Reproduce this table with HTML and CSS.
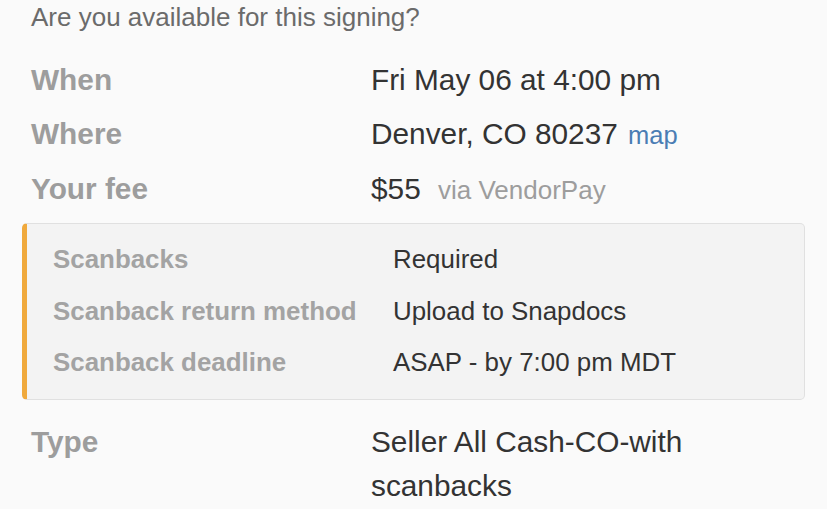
FILE: index.html
```html
<!DOCTYPE html>
<html>
<head>
<meta charset="utf-8">
<link rel="stylesheet" href="styles.css">
</head>
<body>
<div class="page">
  <div class="title">Are you available for this signing?</div>
  <div class="details">
    <div class="row"><div class="label">When</div><div class="value">Fri May 06 at 4:00 pm</div></div>
    <div class="row"><div class="label">Where</div><div class="value">Denver, CO 80237 <a class="map" href="#">map</a></div></div>
    <div class="row"><div class="label">Your fee</div><div class="value">$55 <span class="via">via VendorPay</span></div></div>
  </div>
  <div class="box">
    <div class="brow"><div class="blabel">Scanbacks</div><div class="bvalue">Required</div></div>
    <div class="brow"><div class="blabel">Scanback return method</div><div class="bvalue">Upload to Snapdocs</div></div>
    <div class="brow"><div class="blabel">Scanback deadline</div><div class="bvalue">ASAP - by 7:00 pm MDT</div></div>
  </div>
  <div class="details">
    <div class="row"><div class="label">Type</div><div class="value wrap">Seller All Cash-CO-with scanbacks</div></div>
  </div>
</div>
</body>
</html>
```
FILE: styles.css
```css
html, body {
  margin: 0;
  padding: 0;
  background: #fafafa;
}
body {
  font-family: "Liberation Sans", Arial, Helvetica, sans-serif;
  overflow: hidden;
}
.page {
  padding: 0 22px;
}
.title {
  padding-left: 9px;
  font-size: 26px;
  line-height: 34px;
  color: #6b6b6b;
  margin-bottom: 19px;
}
.row {
  display: flex;
  padding: 5px 0 5px 9px;
  font-size: 29.8px;
  line-height: 44px;
}
.label {
  width: 340px;
  flex: none;
  font-weight: bold;
  color: #9d9d9d;
}
.value {
  color: #333;
  flex: 1;
  max-width: 330px;
}
.map {
  color: #4a7db4;
  text-decoration: none;
  font-size: 25.5px;
  margin-left: 2px;
}
.via {
  color: #9d9d9d;
  font-size: 26px;
  margin-left: 9px;
}
.box {
  margin: 6px 0 15px;
  background: #f3f3f3;
  border: 1px solid #e0e0e0;
  border-left: 5px solid #f0a93c;
  border-radius: 5px;
  padding: 10px 0 10px 26px;
}
.brow {
  display: flex;
  font-size: 25.9px;
  line-height: 51.5px;
}
.blabel {
  width: 340px;
  flex: none;
  font-weight: bold;
  color: #a3a3a3;
}
.bvalue {
  color: #333;
}
```
